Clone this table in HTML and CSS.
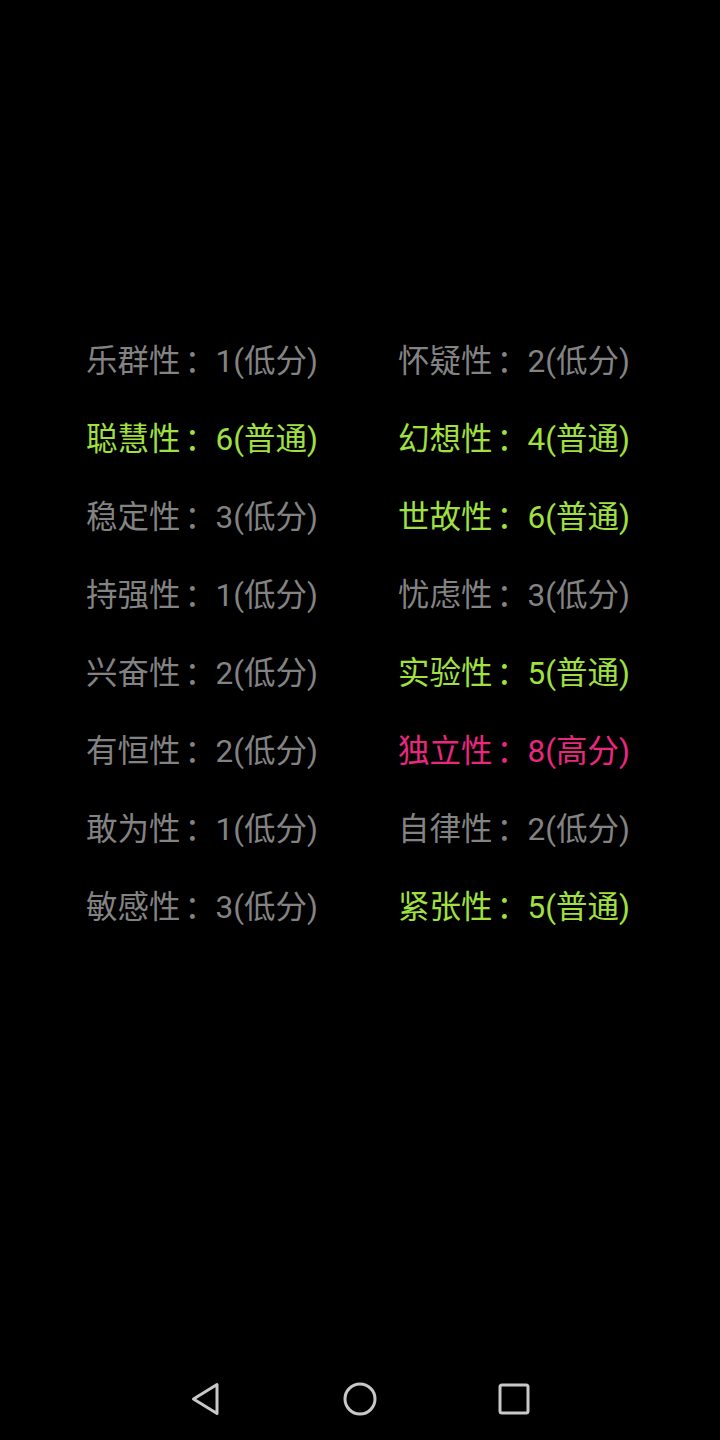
FILE: index.html
```html
<!DOCTYPE html>
<html lang="zh">
<head>
<meta charset="utf-8">
<link rel="stylesheet" href="styles.css">
</head>
<body>
<div class="screen">
  <main class="results">
    <div class="item low">乐群性<span class="colon">：</span>1(低分)</div>
    <div class="item low">怀疑性<span class="colon">：</span>2(低分)</div>
    <div class="item mid">聪慧性<span class="colon">：</span>6(普通)</div>
    <div class="item mid">幻想性<span class="colon">：</span>4(普通)</div>
    <div class="item low">稳定性<span class="colon">：</span>3(低分)</div>
    <div class="item mid">世故性<span class="colon">：</span>6(普通)</div>
    <div class="item low">持强性<span class="colon">：</span>1(低分)</div>
    <div class="item low">忧虑性<span class="colon">：</span>3(低分)</div>
    <div class="item low">兴奋性<span class="colon">：</span>2(低分)</div>
    <div class="item mid">实验性<span class="colon">：</span>5(普通)</div>
    <div class="item low">有恒性<span class="colon">：</span>2(低分)</div>
    <div class="item high">独立性<span class="colon">：</span>8(高分)</div>
    <div class="item low">敢为性<span class="colon">：</span>1(低分)</div>
    <div class="item low">自律性<span class="colon">：</span>2(低分)</div>
    <div class="item low">敏感性<span class="colon">：</span>3(低分)</div>
    <div class="item mid">紧张性<span class="colon">：</span>5(普通)</div>
  </main>
  <nav class="navbar">
    <svg class="nav-icon back" width="36" height="36" viewBox="0 0 36 36"><path d="M29 3.5 L29 32.5 L5.5 18 Z" fill="none" stroke="#c8c8c8" stroke-width="3" stroke-linejoin="round"/></svg>
    <svg class="nav-icon home" width="36" height="36" viewBox="0 0 36 36"><circle cx="18" cy="18" r="15" fill="none" stroke="#c8c8c8" stroke-width="3"/></svg>
    <svg class="nav-icon recent" width="36" height="36" viewBox="0 0 36 36"><rect x="4" y="4" width="28" height="28" rx="2" fill="none" stroke="#c8c8c8" stroke-width="3"/></svg>
  </nav>
</div>
</body>
</html>
```
FILE: styles.css
```css
html, body {
  margin: 0;
  padding: 0;
  background: #000;
}
.screen {
  width: 720px;
  height: 1440px;
  display: flex;
  flex-direction: column;
  background: #000;
  font-family: Roboto, "Noto Sans CJK SC", sans-serif;
}
.results {
  flex: 1;
  padding-top: 323px;
  padding-left: 86px;
  display: grid;
  grid-template-columns: 312px 312px;
  grid-auto-rows: 78px;
  align-content: start;
}
.item {
  font-size: 31.5px;
  line-height: 78px;
  white-space: nowrap;
}
.colon {
  display: inline-block;
  box-sizing: border-box;
  width: 35px;
  padding-left: 4px;
  font-feature-settings: "halt" 1;
}
.low { color: #838383; }
.mid { color: #a0e040; }
.high { color: #e8287f; }
.navbar {
  height: 82px;
  display: flex;
  align-items: center;
  justify-content: center;
  gap: 118px;
}
.nav-icon { display: block; }
```
